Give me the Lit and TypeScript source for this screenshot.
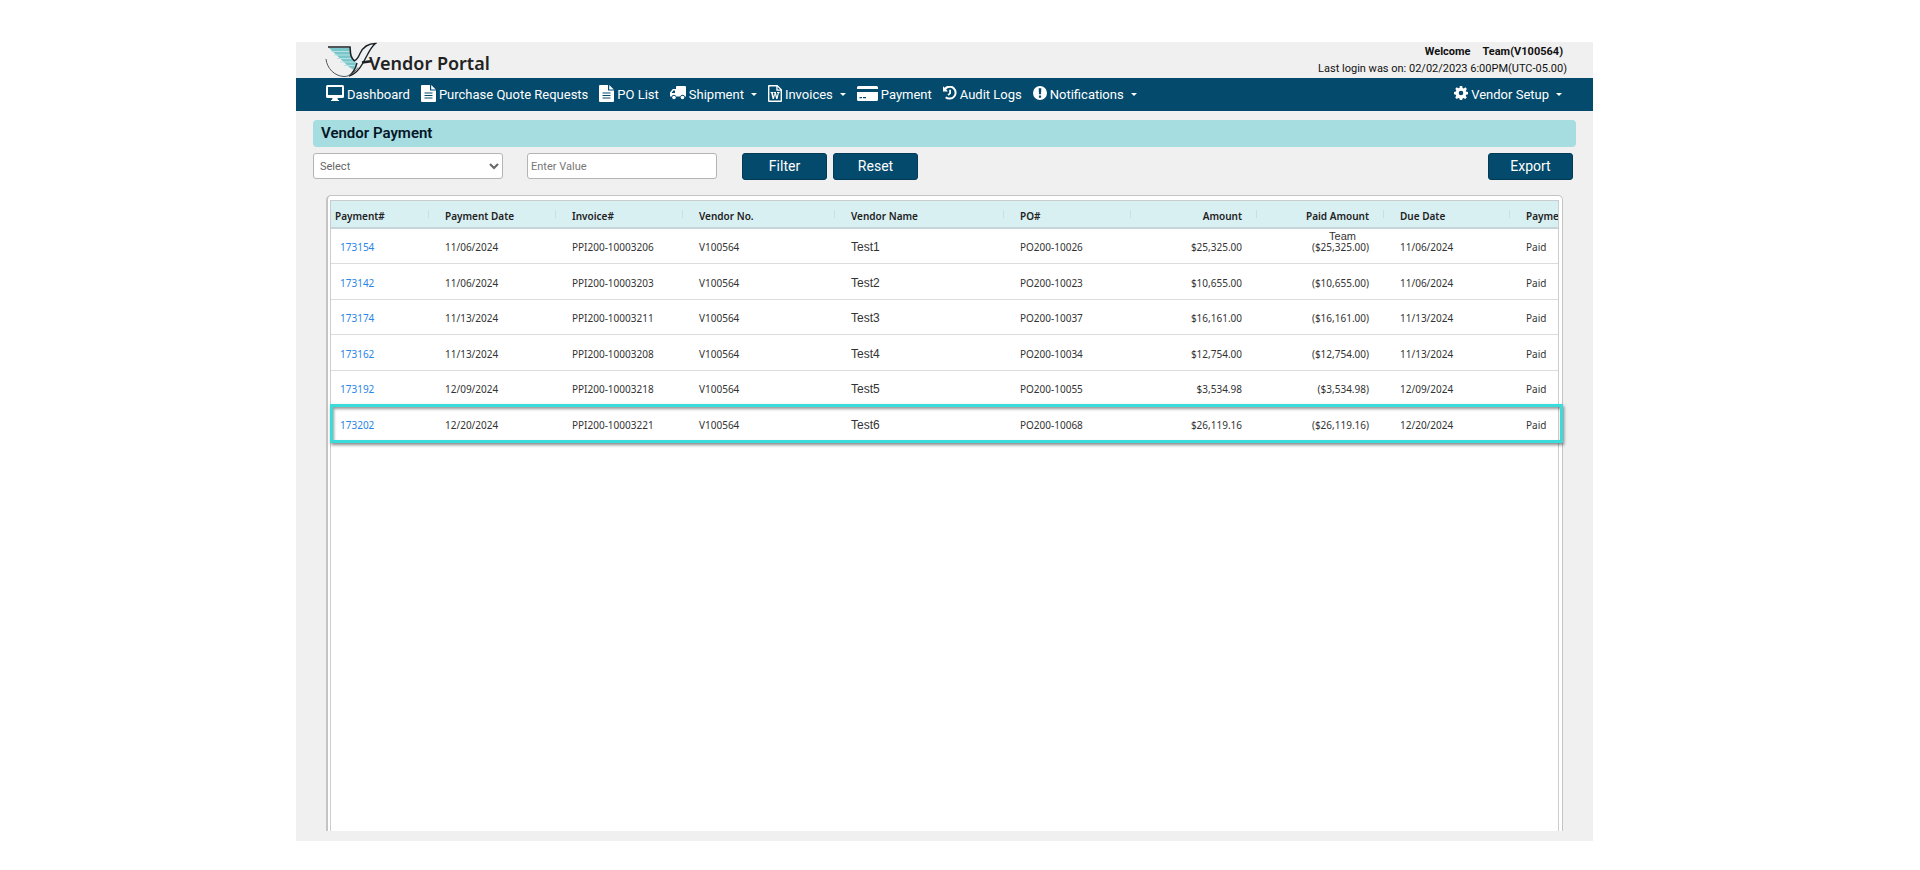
import { LitElement, html, css, svg, nothing } from "lit";
import { customElement } from "lit/decorators.js";
import { classMap } from "lit/directives/class-map.js";

interface NavItem {
  label: string;
  icon: string;
  menu?: boolean;
}

interface PaymentRow {
  id: string;
  date: string;
  invoice: string;
  vendor: string;
  name: string;
  po: string;
  amount: string;
  paid: string;
  due: string;
  note?: string;
  selected?: boolean;
}

const ICONS: Record<string, { w: number; h: number; art: unknown }> = {
  desktop: {
    w: 18,
    h: 16,
    art: svg`<path fill-rule="evenodd" d="M1.500 0h15A1.500 1.500 0 0 1 18 1.500v10a1.500 1.500 0 0 1-1.500 1.500h-5l.5 2h1v1H5v-1h1l.5-2h-5A1.500 1.500 0 0 1 0 11.500v-10A1.500 1.500 0 0 1 1.500 0zM2 2v8h14V2z"/>`,
  },
  file: {
    w: 15,
    h: 17,
    art: svg`<path fill-rule="evenodd" d="M1 0h8v5.500h6V16a1 1 0 0 1-1 1H1a1 1 0 0 1-1-1V1a1 1 0 0 1 1-1zM3.500 7.500v1h8v-1zM3.500 10v1h8v-1zM3.500 12.500v1h8v-1z"/><path d="M10.200 0l4.600 4.400h-4.600z"/>`,
  },
  truck: {
    w: 16,
    h: 14,
    art: svg`<path fill-rule="evenodd" d="M7 0h8a1 1 0 0 1 1 1v9.500h-1.200a2.300 2.300 0 0 0-4.500 0H6.200a2.300 2.300 0 0 0-4.500 0H0V6.500L2.800 3H6V1a1 1 0 0 1 1-1zM3.400 4.400L1.500 6.900H5V4.400z"/><circle cx="4" cy="11.500" r="1.800"/><circle cx="12.500" cy="11.500" r="1.800"/>`,
  },
  word: {
    w: 14,
    h: 17,
    art: svg`<path fill-rule="evenodd" d="M1 0h8.500L14 4.500V16a1 1 0 0 1-1 1H1a1 1 0 0 1-1-1V1a1 1 0 0 1 1-1zM1.400 1.400v14.200h11.200V5.800H8.300V1.400zM9.600 1.900v2.700h2.700z"/><path d="M2.600 7h2.900v1h-.6l.8 3.600L6.600 8H6V7h2v1l.9 3.600.8-3.600H9V7h2.600v1h-.7l-1.400 6H8.200L7 9.600 5.900 14H4.600L3.200 8h-.6z"/>`,
  },
  card: {
    w: 21,
    h: 15,
    art: svg`<path d="M1.500 0h18A1.500 1.500 0 0 1 21 1.500V3H0V1.500A1.500 1.500 0 0 1 1.500 0z"/><path fill-rule="evenodd" d="M0 6h21v7.500a1.500 1.500 0 0 1-1.500 1.500h-18A1.500 1.500 0 0 1 0 13.500zM2.500 11v1.200H5V11zM6 11v1.200h3V11z"/>`,
  },
  history: {
    w: 14,
    h: 14,
    art: svg`<path d="M0 .3l1.500 1.500A7 7 0 1 1 2 11.900l1.500-1.500a4.900 4.900 0 1 0-.4-7L5 5.400H0z"/><path d="M6.200 3.800h1.800v3.700l-2.300 2.200-1.200-1.200 1.700-1.600z"/>`,
  },
  alert: {
    w: 14,
    h: 14,
    art: svg`<path fill-rule="evenodd" d="M7 0a7 7 0 1 1 0 14A7 7 0 0 1 7 0zM5.700 2.300L6 8.300h2l.3-6zM5.900 9.600v2.100h2.200V9.600z"/>`,
  },
  cog: {
    w: 14,
    h: 14,
    art: svg`<path fill-rule="evenodd" d="M5.800 0h2.400l.4 1.900 1.100.5L11.400 1.300l1.500 1.600-1 1.700.4 1.100 1.700.3v2.300l-1.800.4-.5 1.100 1.100 1.700-1.600 1.500-1.700-1-1 .4-.4 1.900H5.900l-.4-1.900-1.100-.4-1.700 1-1.500-1.500 1-1.700-.4-1.100L0 8.200V5.900l1.900-.4.4-1.100-1-1.600 1.500-1.500 1.600 1 1.100-.4zM7 4.700a2.300 2.300 0 1 0 0 4.600 2.300 2.300 0 0 0 0-4.600z"/>`,
  },
};

const NAV: NavItem[] = [
  { label: "Dashboard", icon: "desktop" },
  { label: "Purchase Quote Requests", icon: "file" },
  { label: "PO List", icon: "file" },
  { label: "Shipment", icon: "truck", menu: true },
  { label: "Invoices", icon: "word", menu: true },
  { label: "Payment", icon: "card" },
  { label: "Audit Logs", icon: "history" },
  { label: "Notifications", icon: "alert", menu: true },
];

const ROWS: PaymentRow[] = [
  { id: "173154", date: "11/06/2024", invoice: "PPI200-10003206", vendor: "V100564", name: "Test1", po: "PO200-10026", amount: "$25,325.00", paid: "($25,325.00)", due: "11/06/2024", note: "Team" },
  { id: "173142", date: "11/06/2024", invoice: "PPI200-10003203", vendor: "V100564", name: "Test2", po: "PO200-10023", amount: "$10,655.00", paid: "($10,655.00)", due: "11/06/2024" },
  { id: "173174", date: "11/13/2024", invoice: "PPI200-10003211", vendor: "V100564", name: "Test3", po: "PO200-10037", amount: "$16,161.00", paid: "($16,161.00)", due: "11/13/2024" },
  { id: "173162", date: "11/13/2024", invoice: "PPI200-10003208", vendor: "V100564", name: "Test4", po: "PO200-10034", amount: "$12,754.00", paid: "($12,754.00)", due: "11/13/2024" },
  { id: "173192", date: "12/09/2024", invoice: "PPI200-10003218", vendor: "V100564", name: "Test5", po: "PO200-10055", amount: "$3,534.98", paid: "($3,534.98)", due: "12/09/2024" },
  { id: "173202", date: "12/20/2024", invoice: "PPI200-10003221", vendor: "V100564", name: "Test6", po: "PO200-10068", amount: "$26,119.16", paid: "($26,119.16)", due: "12/20/2024", selected: true },
];

@customElement("portal-header")
export class PortalHeader extends LitElement {
  static styles = css`
    :host {
      display: block;
      font-family: Roboto, sans-serif;
    }
    .top {
      display: flex;
      justify-content: space-between;
      height: 36px;
      padding: 0 26px 0 29px;
    }
    .brand {
      display: flex;
      align-items: flex-start;
      color: #222;
      font: 600 18px/42px "Noto Sans", sans-serif;
      text-decoration: none;
    }
    .mark {
      width: 52px;
      height: 36px;
      margin-right: -8px;
    }
    .who {
      color: #111;
      font-size: 11px;
      line-height: 17px;
      text-align: right;
      padding-top: 1px;
    }
    .name {
      display: flex;
      justify-content: flex-end;
      gap: 12px;
      font-weight: 700;
      padding-right: 4px;
    }
    .nav {
      display: flex;
      align-items: center;
      gap: 11px;
      height: 33px;
      padding: 0 31px 0 30px;
      background: #034a6c;
    }
    .item {
      display: flex;
      align-items: center;
      gap: 3px;
      color: #fff;
      font-size: 13px;
      line-height: 20px;
      text-decoration: none;
      white-space: nowrap;
    }
    .item svg {
      fill: #fff;
      flex: none;
      margin-bottom: 3px;
    }
    .end {
      margin-left: auto;
    }
    .caret {
      margin-left: 4px;
      border: 3px solid transparent;
      border-top-color: #fff;
      border-bottom: 0;
    }
  `;

  private item(entry: NavItem, end = false) {
    const icon = ICONS[entry.icon];
    return html`<a class=${classMap({ item: true, end })} href="#">
      <svg width=${icon.w} height=${icon.h} viewBox="0 0 ${icon.w} ${icon.h}" aria-hidden="true">${icon.art}</svg>
      <span>${entry.label}</span>
      ${entry.menu ? html`<span class="caret"></span>` : nothing}
    </a>`;
  }

  render() {
    return html`
      <header class="top">
        <a class="brand" href="#">
          <svg class="mark" viewBox="0 0 52 36" aria-hidden="true">
            <path fill="#79c6cb" d="M4 6h20l1 6 1.500 5 5.500 4-3 7-5-3z" />
            <path fill="none" stroke="#b9e2e5" d="M6 9.500h19M9 13h17M12 16.500h15M15 20h15M19 23.500h11" />
            <path fill="none" stroke="#1b2024" stroke-width="1.600" d="M3 5h22c.5 6 0 10 4.500 14" />
            <path fill="#eef1f3" stroke="#1b2024" stroke-width="1.400" d="M29 19c3-1 4.500-4 6-7.500C38 5 42 1.500 50.500 1.500 47 4 45 8 42.500 12.500 38.500 20 34 31 24 34c4-3 6.500-7 8-13" />
            <path fill="none" stroke="#1b2024" stroke-width="2.600" d="M37 20.500l9-1.300" />
            <path fill="none" stroke="#50575c" d="M1 17c1 9 8 17 18 17.500 6 0 10-4 14-9" />
          </svg>
          <span>Vendor Portal</span>
        </a>
        <div class="who">
          <div class="name"><span>Welcome</span><span>Team(V100564)</span></div>
          <div>Last login was on: 02/02/2023 6:00PM(UTC-05.00)</div>
        </div>
      </header>
      <nav class="nav">
        ${NAV.map((entry) => this.item(entry))}
        ${this.item({ label: "Vendor Setup", icon: "cog", menu: true }, true)}
      </nav>
    `;
  }
}

@customElement("payment-grid")
export class PaymentGrid extends LitElement {
  static styles = css`
    :host {
      display: flex;
      flex: 1;
      font-family: "Noto Sans", sans-serif;
    }
    .panel {
      flex: 1;
      display: flex;
      padding: 4px 3px 0 2px;
      border: solid #c4c4c4;
      border-width: 1px 1px 0 2px;
      border-radius: 5px 5px 0 0;
      background: #fff;
    }
    .grid {
      flex: 1;
      border: solid #c9cdce;
      border-width: 1px 1px 0;
    }
    .table {
      width: 100%;
      table-layout: fixed;
      border-collapse: separate;
      border-spacing: 0;
      color: #333;
      font-size: 10px;
      line-height: 16px;
    }
    .c98 { width: 98px; }
    .c126 { width: 126px; }
    .c127 { width: 127px; }
    .c152 { width: 152px; }
    .c169 { width: 169px; }
    th,
    td {
      box-sizing: border-box;
      padding: 2px 15px 0 16px;
      text-align: left;
      white-space: nowrap;
    }
    th {
      height: 28px;
      padding-top: 4px;
      overflow: hidden;
      background: linear-gradient(#c9e0e2, #c9e0e2) right 0 center / 1px 8px no-repeat #d9f0f2;
      border-bottom: 2px solid #c5d5d8;
      color: #222;
      font-weight: 600;
    }
    th:first-child {
      padding-left: 4px;
    }
    th:last-child {
      padding-right: 0;
      background: #d9f0f2;
    }
    td {
      height: 35px;
      border-bottom: 1px solid #dcdcdc;
    }
    tr:nth-child(even) td {
      height: 36px;
    }
    td:first-child {
      padding-left: 9px;
    }
    td:last-child {
      padding-right: 0;
    }
    .num {
      text-align: right;
    }
    .noted {
      position: relative;
    }
    .id {
      color: #2a85e8;
      text-decoration: none;
    }
    .vendor {
      font: 12px/16px "Liberation Sans", Arial, sans-serif;
    }
    .note {
      position: absolute;
      top: 0;
      right: 28px;
      font: 11px/15px "Liberation Sans", Arial, sans-serif;
    }
    .selected {
      position: relative;
    }
    .frame {
      position: absolute;
      z-index: 1;
      inset: -2px -5px -1px -1px;
      border: 3px solid #3adbdb;
      box-shadow: 1px 2px 3px #0007, inset 1px 2px 3px #0006;
      pointer-events: none;
    }
  `;

  render() {
    return html`
      <div class="panel">
        <div class="grid">
          <table class="table">
            <colgroup>
              <col class="c98" /><col class="c127" /><col class="c127" /><col class="c152" /><col class="c169" />
              <col class="c127" /><col class="c126" /><col class="c127" /><col class="c126" /><col />
            </colgroup>
            <thead>
              <tr>
                <th>Payment#</th>
                <th>Payment Date</th>
                <th>Invoice#</th>
                <th>Vendor No.</th>
                <th>Vendor Name</th>
                <th>PO#</th>
                <th class="num">Amount</th>
                <th class="num">Paid Amount</th>
                <th>Due Date</th>
                <th>Payme</th>
              </tr>
            </thead>
            <tbody>
              ${ROWS.map(
                (row) => html`<tr class=${classMap({ selected: !!row.selected })}>
                  <td><a class="id" href="#">${row.id}</a>${row.selected ? html`<span class="frame"></span>` : nothing}</td>
                  <td>${row.date}</td>
                  <td>${row.invoice}</td>
                  <td>${row.vendor}</td>
                  <td class="vendor">${row.name}</td>
                  <td>${row.po}</td>
                  <td class="num">${row.amount}</td>
                  <td class=${classMap({ num: true, noted: !!row.note })}>${row.note ? html`<span class="note">${row.note}</span>` : nothing}${row.paid}</td>
                  <td>${row.due}</td>
                  <td>Paid</td>
                </tr>`
              )}
            </tbody>
          </table>
        </div>
      </div>
    `;
  }
}

@customElement("app-root")
export class AppRoot extends LitElement {
  static styles = css`
    :host {
      display: grid;
      grid-template-columns: 296fr 1297fr 327fr;
      box-sizing: border-box;
      min-height: 100vh;
      padding: 42px 0 29px;
      background: #fff;
      font-family: Roboto, sans-serif;
    }
    .shell {
      grid-column: 2;
      display: flex;
      flex-direction: column;
      background: #f0f0f0;
    }
    .main {
      flex: 1;
      display: flex;
      flex-direction: column;
      padding: 9px 17px 10px;
    }
    .title {
      margin: 0;
      padding: 0 8px;
      border-radius: 4px;
      background: #a5dde0;
      color: #041527;
      font-size: 15px;
      font-weight: 600;
      line-height: 27px;
    }
    .tools {
      display: flex;
      align-items: center;
      height: 28px;
      margin-top: 5px;
      padding-right: 3px;
    }
    .field {
      box-sizing: border-box;
      width: 190px;
      height: 26px;
      padding: 0 3px;
      border: 1px solid #b4b4b4;
      border-radius: 3px;
      background: #fff;
      color: #666;
      font: 11px Roboto, sans-serif;
    }
    select.field {
      padding: 0 2px;
    }
    .value {
      margin: 0 25px 0 24px;
    }
    .value::placeholder {
      color: #777;
    }
    .button {
      width: 85px;
      height: 27px;
      margin-right: 6px;
      padding: 0;
      border: 1px solid #033a56;
      border-radius: 3px;
      background: #034a6c;
      color: #fff;
      font: 14px Roboto, sans-serif;
    }
    .export {
      margin: 0 0 0 auto;
    }
    .list {
      margin: 15px 13px 0;
    }
  `;

  render() {
    return html`
      <div class="shell">
        <portal-header></portal-header>
        <main class="main">
          <h1 class="title">Vendor Payment</h1>
          <div class="tools">
            <select class="field" aria-label="Filter field">
              <option>Select</option>
            </select>
            <input class="field value" type="text" placeholder="Enter Value" aria-label="Filter value" />
            <button class="button" type="button">Filter</button>
            <button class="button" type="button">Reset</button>
            <button class="button export" type="button">Export</button>
          </div>
          <payment-grid class="list"></payment-grid>
        </main>
      </div>
    `;
  }
}
